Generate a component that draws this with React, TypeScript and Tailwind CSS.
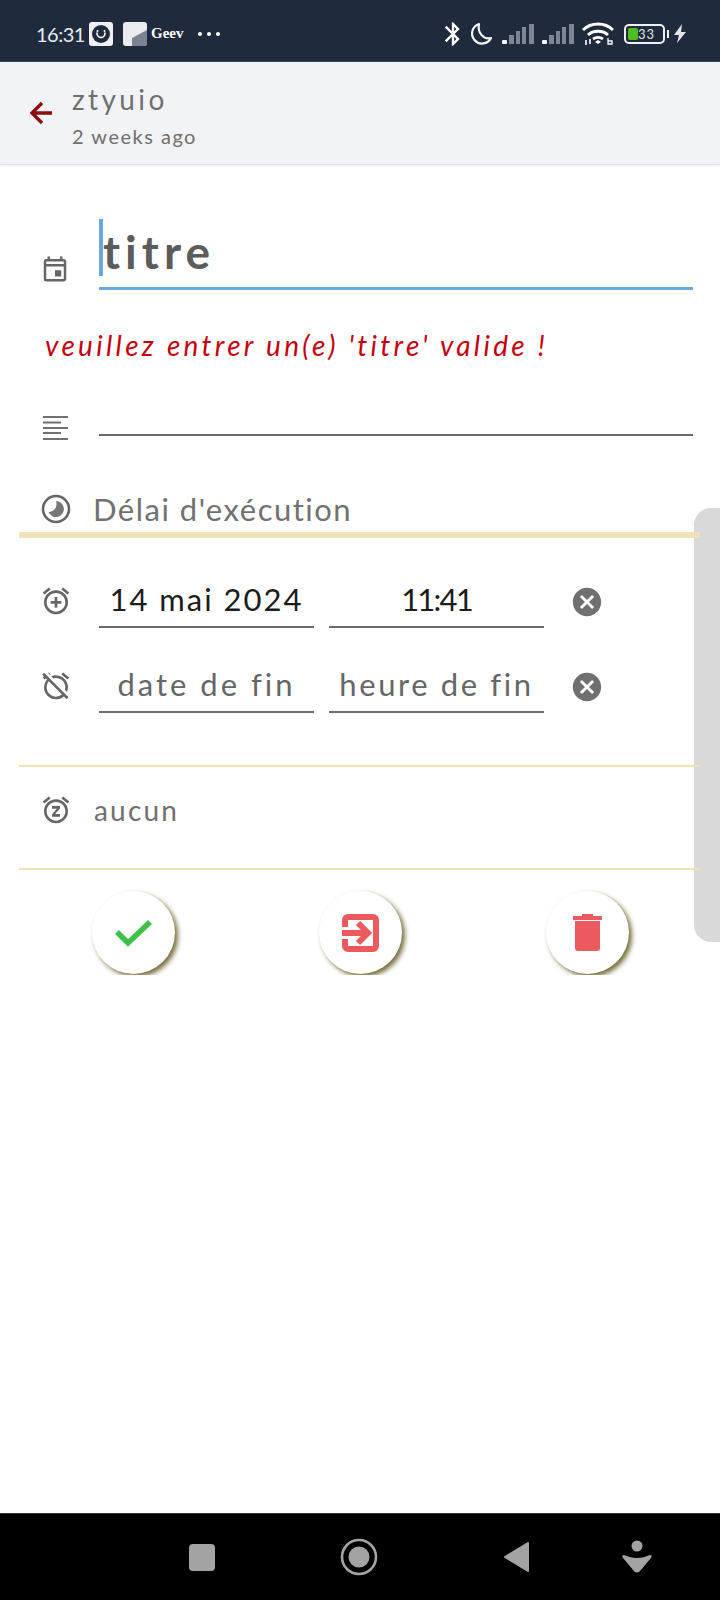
import { MdBluetooth, MdCancel, MdOutlineAlarmAdd, MdOutlineAlarmOff, MdOutlineEvent, MdOutlineSnooze } from "react-icons/md";

const hand = "font-['Lato','Noto_Sans',sans-serif]";

function Signal() {
  return (
    <svg width="32" height="22" viewBox="0 0 32 22">
      <rect x="0" y="17" width="5" height="4" rx="1" fill="#f4f5f7" />
      <rect x="7" y="12" width="5" height="9" fill="#7d8694" />
      <rect x="14" y="8" width="4" height="13" fill="#7d8694" />
      <rect x="20" y="4" width="4" height="17" fill="#7d8694" />
      <rect x="27" y="1" width="5" height="20" fill="#7d8694" />
    </svg>
  );
}

function StatusBar() {
  return (
    <div className="h-[62px] shrink-0 bg-[#1f2a3d] border-b border-[#3b4658] flex items-center pl-[36px] pr-[33px] pt-[6px] text-white">
      <span className={`${hand} w-[47px] text-[20px] tracking-[-0.5px] leading-none text-[#e8eaee]`}>16:31</span>
      <div className="ml-[6px] w-[24px] h-[24px] rounded-[3px] bg-[#eef0f3] flex items-center justify-center">
        <svg width="20" height="20" viewBox="0 0 20 20">
          <circle cx="10" cy="10" r="9" fill="#1f2a3d" />
          <path d="M6 9a4 4.5 0 0 0 8 0" fill="none" stroke="#fff" strokeWidth="1.6" strokeLinecap="round" />
          <circle cx="6.5" cy="7" r="1" fill="#fff" />
          <circle cx="13.5" cy="7" r="1" fill="#fff" />
        </svg>
      </div>
      <svg className="ml-[10px]" width="24" height="24" viewBox="0 0 24 24">
        <rect width="24" height="24" rx="3" fill="#e9ebee" />
        <path d="M9 24 V16 L24 8 V21 a3 3 0 0 1 -3 3 Z" fill="#7b8390" />
      </svg>
      <span className="ml-[4px] font-['Liberation_Serif',serif] font-bold text-[15px] leading-none">Geev</span>
      <div className="ml-[15px] flex gap-[5px]">
        <div className="w-[4px] h-[4px] rounded-full bg-white" />
        <div className="w-[4px] h-[4px] rounded-full bg-white" />
        <div className="w-[4px] h-[4px] rounded-full bg-white" />
      </div>
      <div className="ml-auto flex items-center">
        <MdBluetooth className="w-[28px] h-[28px]" />
        <svg className="ml-[2px]" width="24" height="24" viewBox="0 0 24 24">
          <path d="M10 2a10 10 0 1 0 12 14c-7 2-14-5-12-14z" fill="none" stroke="#f4f5f7" strokeWidth="2.2" strokeLinejoin="round" />
        </svg>
        <div className="ml-[9px]"><Signal /></div>
        <div className="ml-[8px]"><Signal /></div>
        <svg className="ml-[8px]" width="32" height="24" viewBox="0 0 32 24">
          <path d="M1 8C9 0 23 0 31 8M6 13c5-5 15-5 20 0M11 17c3-2 7-2 10 0" fill="none" stroke="#fff" strokeWidth="2.8" />
          <path d="M13 20l3-2 3 2-3 2z" fill="#fff" />
          <path d="M26 16v6h4v-3h-4" fill="none" stroke="#fff" strokeWidth="1.3" />
          <path d="M4 18v5M8 17v5" stroke="#fff" strokeWidth="1.6" />
        </svg>
        <div className="ml-[10px] w-[41px] h-[20px] rounded-[5px] border-2 border-[#eef0f3] p-[2px] relative">
          <div className="w-[10px] h-full rounded-[2px] bg-[#4fbf1f]" />
          <span className={`${hand} absolute left-[12px] top-[-2px] text-[13px] leading-[20px] tracking-[1px] text-[#dfe3e8]`}>33</span>
          <div className="absolute right-[-6px] top-[4px] w-[2px] h-[8px] bg-[#eef0f3]" />
        </div>
        <svg className="ml-[8px]" width="14" height="20" viewBox="0 0 14 20">
          <path d="M9 0L1 11h5l-2 8 9-11H8z" fill="#e4e6ea" />
        </svg>
      </div>
    </div>
  );
}

function Header() {
  return (
    <div className="h-[103px] shrink-0 bg-[#f2f3f6] border-b border-[#e4e4e4] shadow-[0_1px_3px_rgba(0,0,0,0.08)] flex items-center pl-[29px]">
      <svg width="24" height="24" viewBox="0 0 24 24" fill="none" stroke="#8a0f0f" strokeWidth="3.4">
        <path d="M23 12H3M13 2L3 12l10 10" />
      </svg>
      <div className={`${hand} ml-[19px] pt-[6px] text-[#6f6f6f]`}>
        <div className="text-[28px] leading-[34px] tracking-[3.4px]">ztyuio</div>
        <div className="text-[20px] leading-[28px] tracking-[1.5px] mt-[6px]">2 weeks ago</div>
      </div>
    </div>
  );
}

function DateField({ text, className }: { text: string; className: string }) {
  return (
    <div className={`${hand} w-[215px] h-[62px] pt-[13px] border-b-2 border-[#6c6c6c] text-center text-[31px] leading-[40px] ${className}`}>
      {text}
    </div>
  );
}

function CircleButton({ children }: { children: React.ReactNode }) {
  return (
    <div className="w-[83px] h-[83px] rounded-full bg-white shadow-[3px_3px_5px_rgba(95,85,25,0.85)] flex items-center justify-center">
      {children}
    </div>
  );
}

function NavBar() {
  return (
    <div className="h-[87px] shrink-0 bg-black border-t border-[#333] relative">
      <div className="absolute left-[189px] top-[30px] w-[26px] h-[27px] rounded-[4px] bg-[#a3a3a3]" />
      <svg className="absolute left-[340px] top-[24px]" width="38" height="38" viewBox="0 0 38 38">
        <circle cx="19" cy="19" r="17" fill="none" stroke="#a3a3a3" strokeWidth="2.6" />
        <circle cx="19" cy="19" r="10.5" fill="#a3a3a3" />
      </svg>
      <svg className="absolute left-[503px] top-[27px]" width="27" height="32" viewBox="0 0 27 32">
        <path d="M25 2L2 16l23 14z" fill="#a3a3a3" stroke="#a3a3a3" strokeWidth="2" strokeLinejoin="round" />
      </svg>
      <svg className="absolute left-[621px] top-[26px]" width="32" height="34" viewBox="0 0 32 34">
        <circle cx="16" cy="6" r="5.5" fill="#a3a3a3" />
        <path d="M3 15c5 2 8 3 13 3s8-1 13-3c2 0 2 1 1 3L19 31c-2 2-4 2-6 0L2 18c-1-2-1-3 1-3z" fill="#a3a3a3" />
      </svg>
    </div>
  );
}

export default function App() {
  return (
    <div className="relative w-[720px] h-[1600px] overflow-hidden bg-white flex flex-col">
      <StatusBar />
      <Header />

      <div className="flex-1 pt-[54px]">
        {/* titre */}
        <div className="flex items-end pl-[41px] pr-[27px]">
          <MdOutlineEvent className="w-[30px] h-[30px] text-[#666] mb-[6px] -ml-[1px]" />
          <div className="ml-[29px] flex-1 h-[71px] border-b-[3px] border-[#6aa9e0] flex items-start">
            <div className="w-[4px] h-[57px] bg-[#6aa9e0]" />
            <span className={`${hand} font-bold text-[46px] leading-[60px] tracking-[5px] text-[#5c5c5c] mt-[3px]`}>titre</span>
          </div>
        </div>

        <p className={`${hand} italic mt-[37px] pl-[45px] text-[#c4000f] text-[28px] leading-[36px] tracking-[3.3px]`}>
          veuillez entrer un(e) 'titre' valide !
        </p>

        {/* description */}
        <div className="flex items-center mt-[53px] pl-[43px] pr-[27px]">
          <svg width="25" height="24" viewBox="0 0 25 24" fill="#707070">
            <rect x="0" y="0" width="25" height="2" />
            <rect x="0" y="5.5" width="18" height="2" />
            <rect x="0" y="11" width="25" height="2" />
            <rect x="0" y="16" width="18" height="2" />
            <rect x="0" y="22" width="25" height="2" />
          </svg>
          <div className="ml-[31px] flex-1 h-[2px] mt-[14px] bg-[#6c6c6c]" />
        </div>

        <div className="flex items-center mt-[49px] pl-[41px] h-[40px]">
          <svg width="30" height="30" viewBox="0 0 30 30">
            <circle cx="15" cy="15" r="13" fill="none" stroke="#666" strokeWidth="2.6" />
            <path d="M15 7a8 8 0 1 1-7.5 11A8 8 0 0 0 15 7z" fill="#777" />
          </svg>
          <span className={`${hand} ml-[22px] text-[31px] leading-[40px] tracking-[1.5px] text-[#717171]`}>Délai d'exécution</span>
        </div>
        <div className="relative z-10 ml-[19px] w-[681px] h-[6px] mt-[3px] bg-[#efe3b6]" />

        {/* dates */}
        <div className="flex items-end pl-[40px] mt-[28px]">
          <MdOutlineAlarmAdd className="w-[32px] h-[32px] text-[#666] mb-[11px]" />
          <div className="ml-[27px]"><DateField text="14 mai 2024" className="tracking-[2px] text-[#1c1c1c]" /></div>
          <div className="ml-[15px]"><DateField text="11:41" className="tracking-[-1.8px] text-[#1c1c1c]" /></div>
          <MdCancel className="ml-[26px] w-[34px] h-[34px] text-[#707070] mb-[9px]" />
        </div>
        <div className="flex items-end pl-[40px] mt-[23px]">
          <MdOutlineAlarmOff className="w-[32px] h-[32px] text-[#666] mb-[11px]" />
          <div className="ml-[27px]"><DateField text="date de fin" className="tracking-[3px] text-[#666666]" /></div>
          <div className="ml-[15px]"><DateField text="heure de fin" className="tracking-[2.6px] text-[#666666]" /></div>
          <MdCancel className="ml-[26px] w-[34px] h-[34px] text-[#707070] mb-[9px]" />
        </div>

        <div className="relative z-10 ml-[19px] w-[681px] h-[2px] mt-[52px] bg-[#efe3b6]" />
        <div className="flex items-center pl-[40px] h-[101px]">
          <MdOutlineSnooze className="w-[32px] h-[32px] text-[#666] -mt-[16px]" />
          <span className={`${hand} ml-[22px] -mt-[16px] text-[28px] leading-[36px] tracking-[2.2px] text-[#707070]`}>aucun</span>
        </div>
        <div className="relative z-10 ml-[19px] w-[681px] h-[2px] bg-[#efe3b6]" />

        {/* actions */}
        <div className="flex justify-between pl-[92px] pr-[91px] pt-[21px] h-[105px] overflow-hidden">
          <CircleButton>
            <svg width="37" height="28" viewBox="0 0 37 28" fill="none" stroke="#3fc049" strokeWidth="5.5">
              <path d="M2 13l11 11L35 3" />
            </svg>
          </CircleButton>
          <CircleButton>
            <svg width="37" height="38" viewBox="0 0 37 38" fill="none" stroke="#ea5a5e" strokeWidth="6">
              <path d="M3 13V6a3 3 0 0 1 3-3h25a3 3 0 0 1 3 3v26a3 3 0 0 1-3 3H6a3 3 0 0 1-3-3v-7" />
              <path d="M0 19h26M16 9l10 10-10 10" />
            </svg>
          </CircleButton>
          <CircleButton>
            <svg width="29" height="38" viewBox="0 0 29 38" fill="#ea5a5e">
              <path d="M0 2h9V0h11v2h9v4H0z" />
              <path d="M2 7h25v27a3 3 0 0 1-3 3H5a3 3 0 0 1-3-3z" />
            </svg>
          </CircleButton>
        </div>
      </div>

      <NavBar />

      {/* side panel handle */}
      <div className="absolute right-0 top-[508px] w-[26px] h-[434px] rounded-l-[17px] bg-[#d9d9d9]" />
    </div>
  );
}
